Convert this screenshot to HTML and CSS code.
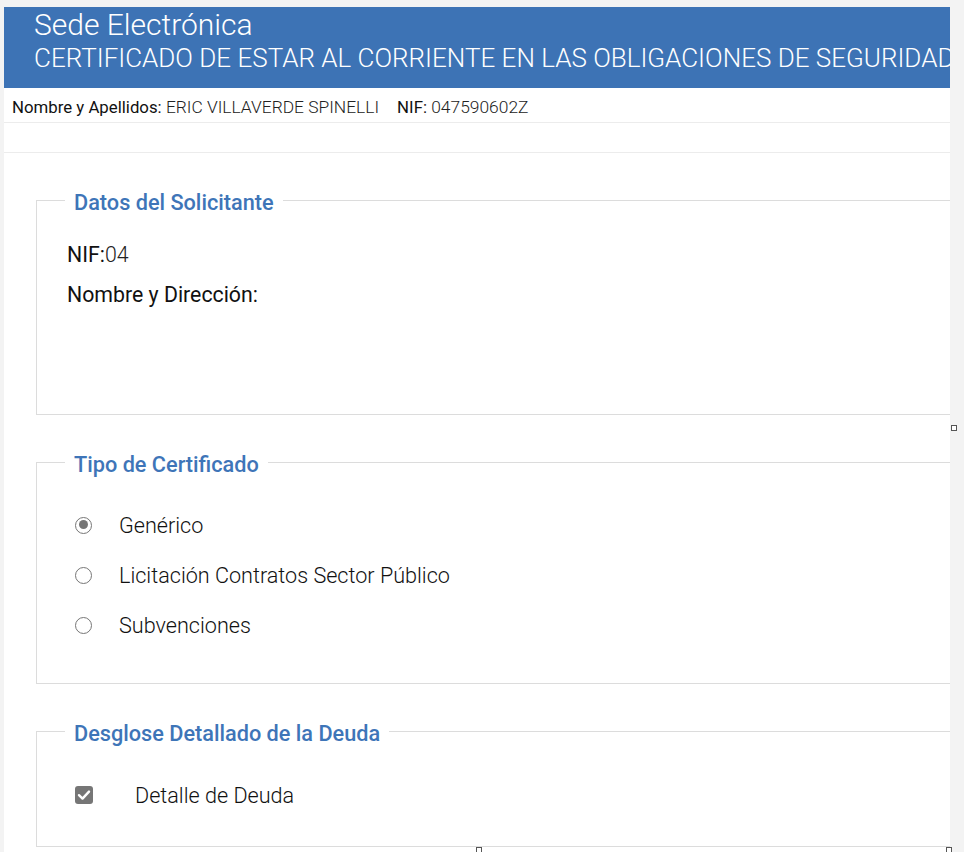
FILE: index.html
```html
<!DOCTYPE html>
<html lang="es">
<head>
<meta charset="utf-8">
<title>Sede Electrónica</title>
<link rel="stylesheet" href="styles.css">
</head>
<body>
<div class="page">
  <header class="header">
    <div class="title">Sede Electrónica</div>
    <div class="subtitle">CERTIFICADO DE ESTAR AL CORRIENTE EN LAS OBLIGACIONES DE SEGURIDAD</div>
  </header>
  <div class="userbar">
    <span class="lbl">Nombre y Apellidos:</span><span class="val">&nbsp;ERIC VILLAVERDE SPINELLI</span>
    <span class="lbl nif">NIF:</span><span class="val">&nbsp;047590602Z</span>
  </div>
  <div class="spacer"></div>
  <main class="content">
    <fieldset class="box box-datos">
      <legend>Datos del Solicitante</legend>
      <div class="line"><span class="lbl">NIF:</span><span class="val">04</span></div>
      <div class="line"><span class="lbl">Nombre y Dirección:</span></div>
    </fieldset>
    <fieldset class="box box-tipo">
      <legend>Tipo de Certificado</legend>
      <div class="opt"><span class="radio checked"></span><span class="opt-label">Genérico</span></div>
      <div class="opt"><span class="radio"></span><span class="opt-label">Licitación Contratos Sector Público</span></div>
      <div class="opt"><span class="radio"></span><span class="opt-label">Subvenciones</span></div>
    </fieldset>
    <fieldset class="box box-deuda">
      <legend>Desglose Detallado de la Deuda</legend>
      <div class="opt"><span class="check"><svg viewBox="0 0 18 18" width="18" height="18"><path d="M4 9.2 L7.5 12.6 L14 5.6" fill="none" stroke="#fff" stroke-width="2.4" stroke-linecap="round" stroke-linejoin="round"/></svg></span><span class="opt-label chk-label">Detalle de Deuda</span></div>
    </fieldset>
  </main>
</div>
<span class="handle h1"></span>
<span class="handle h2"></span>
<span class="handle h3"></span>
</body>
</html>
```
FILE: styles.css
```css
html, body {
  margin: 0;
  padding: 0;
}
body {
  background: #f3f3f3;
  font-family: Roboto, "Liberation Sans", sans-serif;
  color: #111;
  height: 852px;
  overflow: hidden;
  position: relative;
}
.page {
  margin-left: 4px;
  margin-top: 7px;
  width: 946px;
  height: 845px;
  background: #fff;
  overflow: hidden;
}
.header {
  background: #3d73b5;
  height: 81px;
  box-sizing: border-box;
  padding: 1px 0 0 30px;
  color: #fff;
  white-space: nowrap;
  overflow: hidden;
}
.title {
  font-size: 30px;
  font-weight: 300;
  line-height: 34px;
}
.subtitle {
  font-size: 26px;
  font-weight: 300;
  line-height: 33px;
}
.userbar {
  height: 35px;
  box-sizing: border-box;
  border-bottom: 1px solid #ececec;
  display: flex;
  align-items: center;
  padding: 3px 0 0 8px;
  font-size: 16.8px;
  white-space: nowrap;
}
.userbar .lbl {
  font-weight: 400;
  color: #111;
}
.userbar .val {
  font-weight: 300;
  color: #222;
  font-size: 17.4px;
}
.userbar .nif {
  margin-left: 18px;
}
.spacer {
  height: 30px;
  box-sizing: border-box;
  border-bottom: 1px solid #ececec;
}
.content {
  padding-left: 32px;
}
.box {
  width: 1000px;
  margin: 32px 0 0 0;
  border: 1px solid #dcdcdc;
  padding: 0 0 0 30px;
  box-sizing: border-box;
}
.box legend {
  font-size: 21.7px;
  font-weight: 500;
  color: #3e75b8;
  line-height: 24px;
  padding: 6px 9px 0 9px;
  margin-left: -2px;
}
.box-datos {
  padding-top: 19px;
  padding-bottom: 100px;
}
.line {
  height: 40px;
  display: flex;
  align-items: center;
  font-size: 21.3px;
}
.line .lbl {
  font-weight: 400;
  color: #111;
}
.line .val {
  font-weight: 300;
  color: #222;
}
.box-tipo {
  padding-top: 23px;
  padding-bottom: 33px;
}
.box-deuda {
  padding-top: 24px;
  padding-bottom: 26px;
}
.opt {
  height: 50px;
  display: flex;
  align-items: center;
  padding-left: 8px;
}
.radio {
  width: 17px;
  height: 17px;
  box-sizing: border-box;
  border: 1.5px solid #767676;
  border-radius: 50%;
  position: relative;
  flex: none;
}
.radio.checked::after {
  content: "";
  position: absolute;
  left: 2.5px;
  top: 2.5px;
  width: 9px;
  height: 9px;
  border-radius: 50%;
  background: #767676;
}
.check {
  width: 18px;
  height: 18px;
  border-radius: 3px;
  background: #767676;
  display: flex;
  flex: none;
}
.opt-label {
  margin-left: 27px;
  font-size: 21.6px;
  font-weight: 300;
  color: #111;
}
.chk-label {
  margin-left: 42px;
}
.handle {
  position: absolute;
  width: 4px;
  height: 4px;
  border: 1px solid #555;
  background: #fff;
}
.h1 { left: 951px; top: 425px; }
.h2 { left: 476px; top: 847px; }
.h3 { left: 946px; top: 847px; }
```
